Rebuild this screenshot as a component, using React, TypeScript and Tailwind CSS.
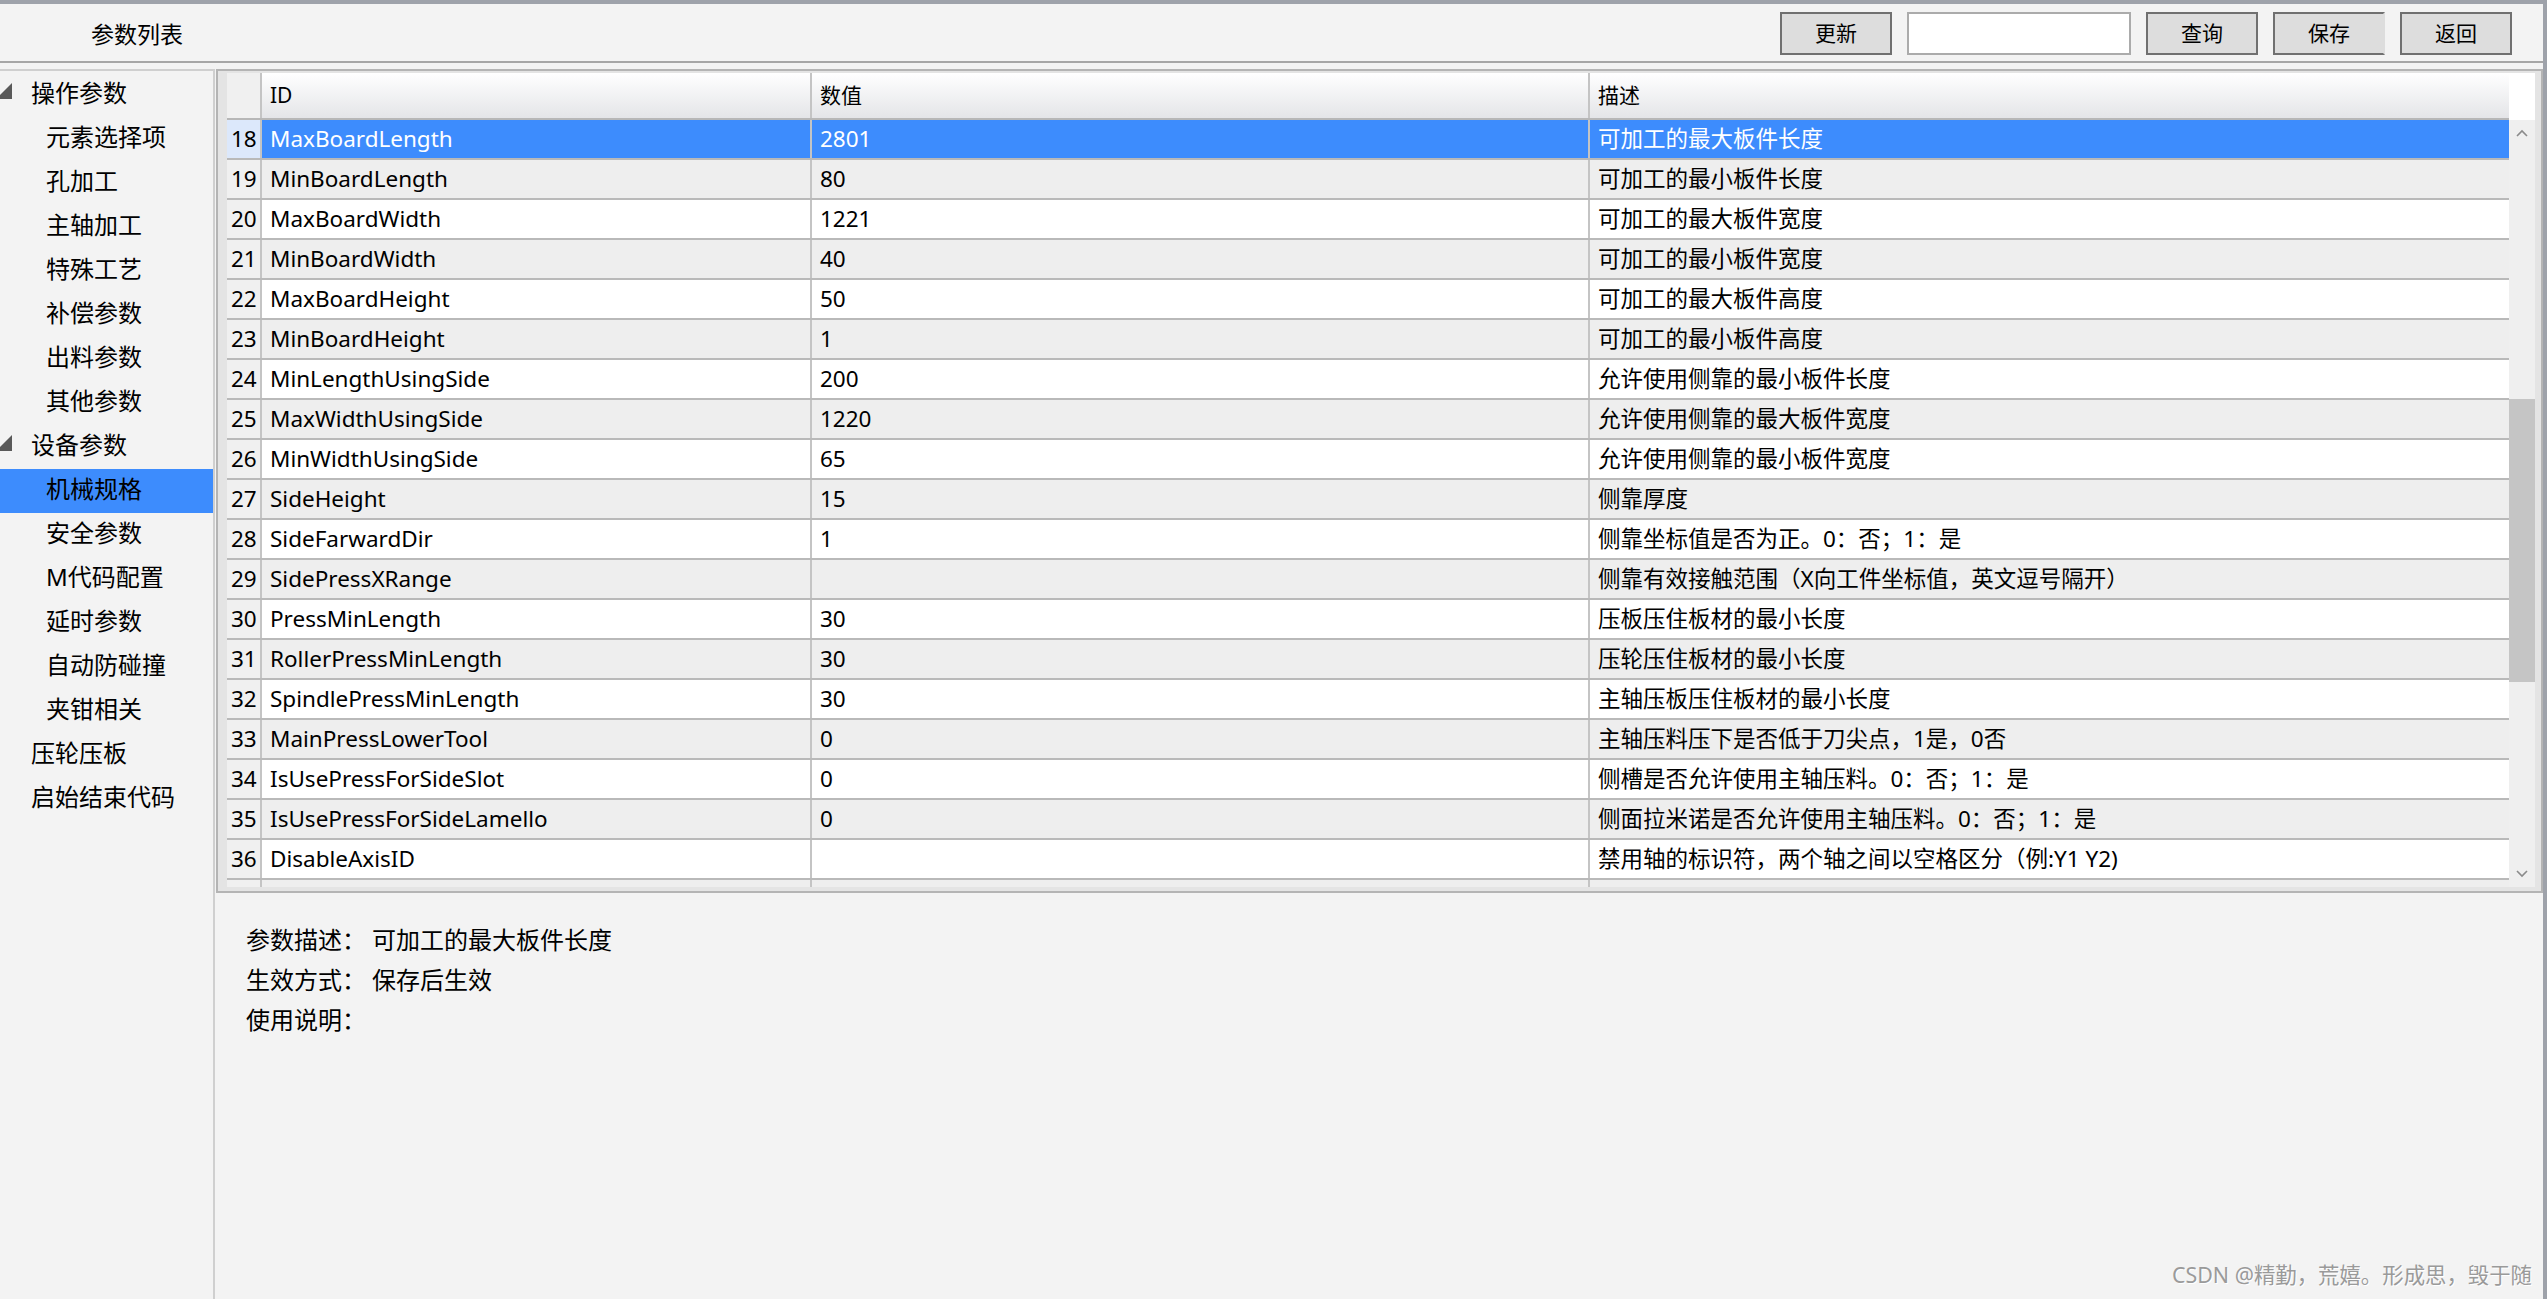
import React from 'react'

const rows: [number, string, string, string][] = [
  [18, 'MaxBoardLength', '2801', '可加工的最大板件长度'],
  [19, 'MinBoardLength', '80', '可加工的最小板件长度'],
  [20, 'MaxBoardWidth', '1221', '可加工的最大板件宽度'],
  [21, 'MinBoardWidth', '40', '可加工的最小板件宽度'],
  [22, 'MaxBoardHeight', '50', '可加工的最大板件高度'],
  [23, 'MinBoardHeight', '1', '可加工的最小板件高度'],
  [24, 'MinLengthUsingSide', '200', '允许使用侧靠的最小板件长度'],
  [25, 'MaxWidthUsingSide', '1220', '允许使用侧靠的最大板件宽度'],
  [26, 'MinWidthUsingSide', '65', '允许使用侧靠的最小板件宽度'],
  [27, 'SideHeight', '15', '侧靠厚度'],
  [28, 'SideFarwardDir', '1', '侧靠坐标值是否为正。0：否；1：是'],
  [29, 'SidePressXRange', '', '侧靠有效接触范围（X向工件坐标值，英文逗号隔开）'],
  [30, 'PressMinLength', '30', '压板压住板材的最小长度'],
  [31, 'RollerPressMinLength', '30', '压轮压住板材的最小长度'],
  [32, 'SpindlePressMinLength', '30', '主轴压板压住板材的最小长度'],
  [33, 'MainPressLowerTool', '0', '主轴压料压下是否低于刀尖点，1是，0否'],
  [34, 'IsUsePressForSideSlot', '0', '侧槽是否允许使用主轴压料。0：否；1：是'],
  [35, 'IsUsePressForSideLamello', '0', '侧面拉米诺是否允许使用主轴压料。0：否；1：是'],
  [36, 'DisableAxisID', '', '禁用轴的标识符，两个轴之间以空格区分（例:Y1 Y2)'],
  [37, '', '', ''],
]

// level 0 = top node with triangle, 1 = child, 2 = top node without children
const tree: { label: string; level: 0 | 1 | 2; selected?: boolean }[] = [
  { label: '操作参数', level: 0 },
  { label: '元素选择项', level: 1 },
  { label: '孔加工', level: 1 },
  { label: '主轴加工', level: 1 },
  { label: '特殊工艺', level: 1 },
  { label: '补偿参数', level: 1 },
  { label: '出料参数', level: 1 },
  { label: '其他参数', level: 1 },
  { label: '设备参数', level: 0 },
  { label: '机械规格', level: 1, selected: true },
  { label: '安全参数', level: 1 },
  { label: 'M代码配置', level: 1 },
  { label: '延时参数', level: 1 },
  { label: '自动防碰撞', level: 1 },
  { label: '夹钳相关', level: 1 },
  { label: '压轮压板', level: 2 },
  { label: '启始结束代码', level: 2 },
]

function Triangle() {
  return (
    <svg width="12" height="16" viewBox="0 0 12 16" className="shrink-0 mb-[8px]">
      <polygon points="-4,16 12,16 12,0" fill="#595959" />
    </svg>
  )
}

function Chevron({ down }: { down?: boolean }) {
  return (
    <svg width="12" height="8" viewBox="0 0 12 8">
      <polyline
        points={down ? '1,1 6,6 11,1' : '1,7 6,2 11,7'}
        fill="none"
        stroke="#8a8a8a"
        strokeWidth="1.6"
      />
    </svg>
  )
}

function Btn({ label, className = '' }: { label: string; className?: string }) {
  return (
    <div
      className={`w-[112px] h-[43px] bg-[#dddddd] border-2 border-[#707070] flex items-center justify-center text-[21px] text-black ${className}`}
    >
      {label}
    </div>
  )
}

export default function App() {
  return (
    <div className="w-[2547px] h-[1299px] bg-[#f3f3f3] border-t-4 border-r-4 border-[#9ea2aa] flex flex-col overflow-hidden font-['Noto_Sans','Noto_Sans_CJK_SC',sans-serif] text-black">
      {/* top bar */}
      <div className="h-[59px] shrink-0 border-b-2 border-[#a6a6a6] flex items-center pl-[91px] pr-[31px]">
        <span className="text-[23px] mt-[4px]">参数列表</span>
        <div className="ml-auto flex items-center gap-[15px] mt-[2px]">
          <Btn label="更新" />
          <div className="w-[224px] h-[43px] bg-white border-2 border-[#ababab]" />
          <Btn label="查询" />
          <Btn label="保存" className="border-r-[#dddddd]" />
          <Btn label="返回" />
        </div>
      </div>

      <div className="flex-1 flex min-h-0">
        {/* tree */}
        <div className="w-[215px] shrink-0 mt-[6px] border-t-2 border-r-2 border-[#cfcfcf] pt-[2px]">
          {tree.map((n, i) => (
            <div
              key={i}
              className={`h-[44px] flex items-center text-[24px] ${n.selected ? 'bg-[#3d8cfd]' : ''}`}
            >
              {n.level === 0 && <Triangle />}
              <span
                className={`pb-[5px] ${n.level === 0 ? 'ml-[19px]' : n.level === 1 ? 'ml-[46px]' : 'ml-[31px]'}`}
              >
                {n.label}
              </span>
            </div>
          ))}
        </div>

        {/* right content */}
        <div className="flex-1 flex flex-col min-w-0">
          <div className="ml-px mt-[6px] border-2 border-[#b4b4b4] bg-[#e4e4e4] pl-[9px] pt-[2px] pb-[4px] pr-[6px]">
            <div className="h-[814px] flex">
              {/* table */}
              <div className="flex-1 flex flex-col overflow-hidden bg-white min-w-0">
                <div className="h-[47px] shrink-0 flex border-b-2 border-[#b7b7b7] text-[21px]">
                  <div className="w-[33px] shrink-0 bg-[#f0f0f0]" />
                  <div className="w-[550px] shrink-0 border-l-2 border-[#c4c4c4] pl-[8px] flex items-center bg-linear-to-b from-white to-[#e4e5e8]">
                    ID
                  </div>
                  <div className="w-[778px] shrink-0 border-l-2 border-[#c4c4c4] pl-[8px] flex items-center bg-linear-to-b from-white to-[#e4e5e8]">
                    数值
                  </div>
                  <div className="flex-1 border-l-2 border-[#c4c4c4] pl-[8px] flex items-center bg-linear-to-b from-white to-[#e4e5e8]">
                    描述
                  </div>
                </div>
                <div className="flex-1 overflow-hidden">
                  {rows.map(([n, id, val, desc]) => {
                    const sel = n === 18
                    const bg = sel ? 'bg-[#3d8cfd] text-white' : n % 2 === 1 ? 'bg-[#eeeeee]' : 'bg-white'
                    return (
                      <div key={n} className="h-[40px] flex border-b-2 border-[#b9b9b9] text-[22.5px] whitespace-nowrap">
                        <div className={`w-[33px] shrink-0 pl-[4px] flex items-center ${sel ? 'bg-[#dce8fb]' : 'bg-[#f0f0f0]'}`}>
                          {id ? n : ''}
                        </div>
                        <div className={`w-[550px] shrink-0 border-l-2 border-[#c4c4c4] pl-[8px] flex items-center ${bg}`}>{id}</div>
                        <div className={`w-[778px] shrink-0 border-l-2 border-[#c4c4c4] pl-[8px] flex items-center ${bg}`}>{val}</div>
                        <div className={`flex-1 border-l-2 border-[#c4c4c4] pl-[8px] flex items-center ${bg}`}>{desc}</div>
                      </div>
                    )
                  })}
                </div>
              </div>
              {/* scrollbar */}
              <div className="w-[26px] shrink-0 flex flex-col">
                <div className="h-[47px] shrink-0 bg-white" />
                <div className="flex-1 bg-[#efefef] flex flex-col">
                  <div className="h-[26px] shrink-0 flex items-center justify-center">
                    <Chevron />
                  </div>
                  <div className="h-[253px] shrink-0" />
                  <div className="h-[283px] shrink-0 bg-[#c5c5c5]" />
                  <div className="flex-1" />
                  <div className="h-[26px] shrink-0 flex items-center justify-center">
                    <Chevron down />
                  </div>
                </div>
              </div>
            </div>
          </div>

          {/* detail panel */}
          <div className="flex-1 relative pl-[31px] pt-[27px] text-[24px] border-l-2 border-[#cfcfcf] -ml-[2px]">
            <div className="h-[40px] flex items-center">
              <span className="w-[126px] shrink-0">参数描述：</span>
              <span>可加工的最大板件长度</span>
            </div>
            <div className="h-[40px] flex items-center">
              <span className="w-[126px] shrink-0">生效方式：</span>
              <span>保存后生效</span>
            </div>
            <div className="h-[40px] flex items-center">
              <span className="w-[126px] shrink-0">使用说明：</span>
            </div>
            <div className="absolute right-[11px] bottom-[8px] text-[21.4px] text-[#9a9a9a] [text-shadow:1px_1px_0_#ffffff]">
              CSDN @精勤，荒嬉。形成思，毁于随
            </div>
          </div>
        </div>
      </div>
    </div>
  )
}
